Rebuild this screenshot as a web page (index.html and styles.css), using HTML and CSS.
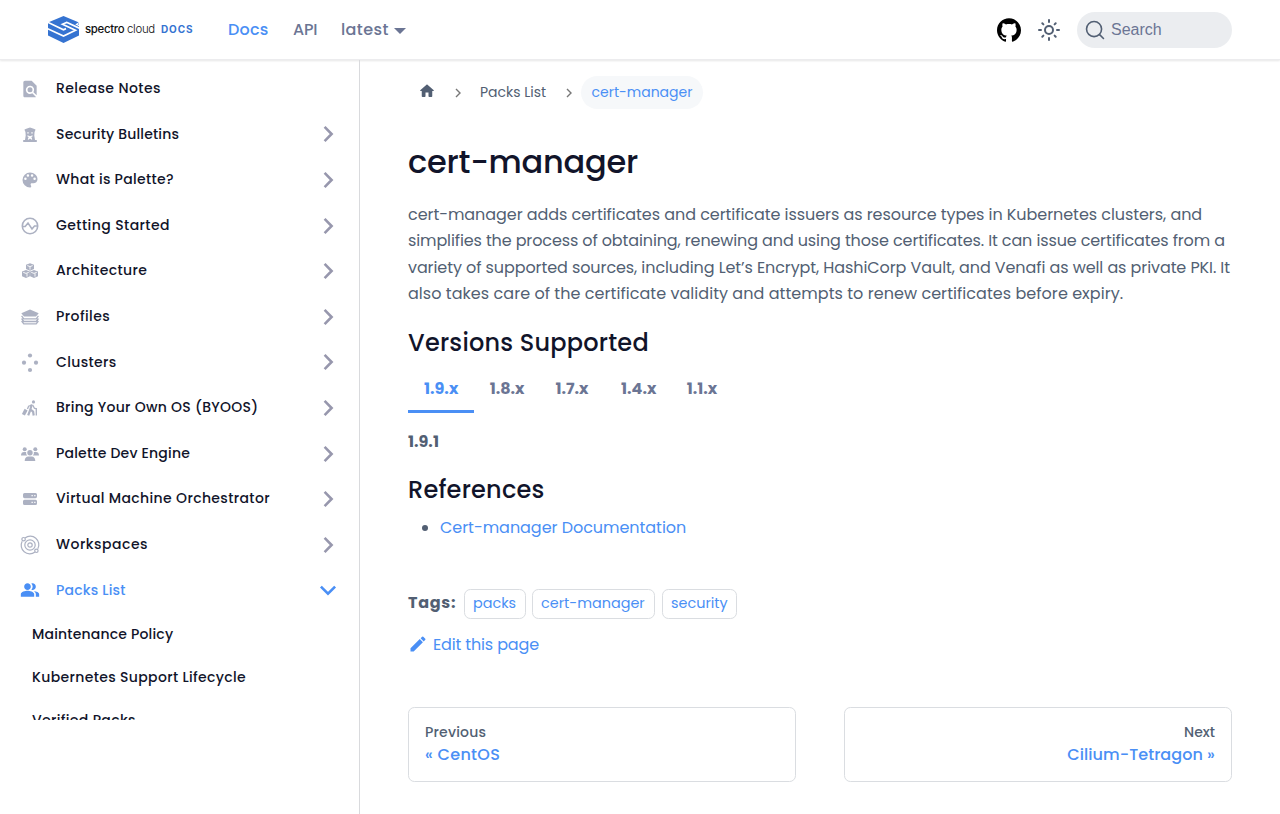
FILE: index.html
```html
<!DOCTYPE html>
<html lang="en">
<head>
<meta charset="utf-8">
<title>cert-manager | Palette</title>
<link rel="stylesheet" href="styles.css">
</head>
<body>
<svg class="defs" aria-hidden="true">
  <symbol id="chev" viewBox="0 0 18 18"><path d="M5.600 1.900 12.600 9 5.600 16.100" fill="none" stroke="currentColor" stroke-width="2.600"/></symbol>
  <symbol id="people" viewBox="0 0 24 24"><path d="M16.67 13.13C18.04 14.06 19 15.32 19 17v3h4v-3c0-2.18-3.57-3.47-6.33-3.87M15 12c2.21 0 4-1.79 4-4s-1.79-4-4-4c-.47 0-.91.1-1.33.24a5.98 5.98 0 0 1 0 7.52c.42.14.86.24 1.33.24M9 12c2.21 0 4-1.79 4-4s-1.79-4-4-4-4 1.79-4 4 1.79 4 4 4m0 1c-2.67 0-8 1.34-8 4v3h16v-3c0-2.66-5.33-4-8-4"/></symbol>
</svg>
<header class="navbar">
  <a class="logo">
    <svg class="mark" viewBox="0 0 31 27"><path fill="#3573d1" d="M0 6.500 15.500 0 31 6.500V19.500L15.500 27 0 19.500z"/><path fill="none" stroke="#fff" stroke-width="1.700" d="M-.5 12.700 15.500 20 27.500 14.200 14.500 8.200 19 6.200M-.5 6.200 15.500 13.700 18 12.600M31.500 12.200 18.500 6.200"/><path fill="none" stroke="#fff" stroke-width="1.200" d="M31.500 6.300 28.500 8.300 32 10"/></svg>
    <span class="brand">spectro <span class="cloud">cloud</span></span>
    <span class="docs">DOCS</span>
  </a>
  <nav class="links"><a class="active n-docs">Docs</a><a class="n-api">API</a><a class="drop n-latest">latest</a></nav>
  <div class="tools">
    <svg class="github" viewBox="0 0 24 24"><path d="M12 .297c-6.63 0-12 5.373-12 12 0 5.303 3.438 9.8 8.205 11.385.6.113.82-.258.82-.577 0-.285-.01-1.04-.015-2.04-3.338.724-4.042-1.61-4.042-1.61C4.422 18.07 3.633 17.7 3.633 17.7c-1.087-.744.084-.729.084-.729 1.205.084 1.838 1.236 1.838 1.236 1.07 1.835 2.809 1.305 3.495.998.108-.776.417-1.305.76-1.605-2.665-.3-5.466-1.332-5.466-5.93 0-1.31.465-2.38 1.235-3.22-.135-.303-.54-1.523.105-3.176 0 0 1.005-.322 3.3 1.23.96-.267 1.98-.399 3-.405 1.02.006 2.04.138 3 .405 2.28-1.552 3.285-1.23 3.285-1.23.645 1.653.24 2.873.12 3.176.765.84 1.23 1.91 1.23 3.22 0 4.61-2.805 5.625-5.475 5.92.42.36.81 1.096.81 2.22 0 1.606-.015 2.896-.015 3.286 0 .315.21.69.825.57C20.565 22.092 24 17.592 24 12.297c0-6.627-5.373-12-12-12"/></svg>
    <svg class="sun" viewBox="0 0 24 24"><g fill="none" stroke="#525f73" stroke-width="2" stroke-linecap="round"><circle cx="12" cy="12" r="4"/><path d="M2 12h2M20 12h2M12 2v2M12 20v2M5.300 5.300l1.100 1.100M17.600 17.600l1.100 1.100M5.300 18.700l1.100-1.100M17.600 6.400l1.100-1.100"/></g></svg>
    <div class="search"><svg viewBox="0 0 20 20"><path d="M14.386 14.386l4.088 4.088-4.088-4.088c-2.942 2.942-7.711 2.942-10.653 0s-2.942-7.711 0-10.653 7.711-2.942 10.653 0 2.942 7.711 0 10.653z" stroke="#525f73" stroke-width="1.600" fill="none" stroke-linecap="round" stroke-linejoin="round"/></svg><span>Search</span></div>
  </div>
</header>
<div class="page">
<aside class="sidebar">
  <ul class="menu">
    <li><svg class="ic" viewBox="0 0 24 24"><path d="M20 19.590V8l-6-6H6c-1.100 0-2 .9-2 2v16c0 1.100.9 2 2 2h12c.45 0 .85-.15 1.190-.4l-4.430-4.430A5 5 0 1 1 16.170 15.750zM9 13a3 3 0 1 0 6 0 3 3 0 0 0-6 0"/></svg><span class="s1">Release Notes</span></li>
    <li><svg class="ic" viewBox="0 0 20 20"><path fill-rule="evenodd" d="M4.500 4.500 7 3.500 10 2.500l3 1 2.500 1-.6 2H14.600l-.3 4 .7 4.500h1.800V17H3.200v-2H5l.7-4.500-.3-4h-.3zM7.300 7.200v1.300h1.400V7.200zm4 0v1.300h1.400V7.200zM7.500 10.300v1.200l1.200.6-1 2.200.8.500 1.500-1.300 1.500 1.300.8-.5-1-2.200 1.200-.6v-1.200l-2.500 1z"/></svg><span class="s2">Security Bulletins</span><svg class="ch"><use href="#chev"/></svg></li>
    <li><svg class="ic" viewBox="0 0 24 24"><path d="M12 3a9 9 0 0 0 0 18c.83 0 1.500-.67 1.500-1.500 0-.39-.15-.74-.39-1.010-.23-.26-.38-.61-.38-.99 0-.83.67-1.500 1.500-1.500H16c2.760 0 5-2.240 5-5 0-4.420-4.030-8-9-8m-5.500 9a1.500 1.500 0 1 1 0-3 1.500 1.500 0 0 1 0 3m3-4a1.500 1.500 0 1 1 0-3 1.500 1.500 0 0 1 0 3m5 0a1.500 1.500 0 1 1 0-3 1.500 1.500 0 0 1 0 3m3 4a1.500 1.500 0 1 1 0-3 1.500 1.500 0 0 1 0 3"/></svg><span class="s3">What is Palette?</span><svg class="ch"><use href="#chev"/></svg></li>
    <li><svg class="ic" viewBox="0 0 20 20"><g fill="none" stroke="currentColor" stroke-width="1.600"><circle cx="10" cy="10" r="7.700"/><path d="M2.500 10.500h2.700L8 7l4 6 2.500-3h3"/></g></svg><span class="s4">Getting Started</span><svg class="ch"><use href="#chev"/></svg></li>
    <li><svg class="ic" viewBox="0 0 20 20"><path d="M10 2.300 14 3.800v4.300L10 9.800 6 8.100V3.800zM6 9l3.900 1.500v4.700L6 17l-4-1.800v-4.700zM14 9l4 1.500v4.700L14 17l-3.900-1.800v-4.700z"/><path stroke="#fff" fill="none" stroke-width=".9" d="m7.300 4.600 2.700 1 2.700-1M10 5.600v3M3.200 11.300l2.800 1.100 2.800-1.100M7 12.400v3.200M11.200 11.300l2.800 1.100 2.800-1.100M15 12.400v3.200"/></svg><span class="s5">Architecture</span><svg class="ch"><use href="#chev"/></svg></li>
    <li><svg class="ic" viewBox="0 0 20 20"><path d="m10 2.500 8.700 3.800L16 9.600H4L1.300 6.300z"/><path fill="none" stroke="currentColor" stroke-width="1.300" d="m1.600 8.800 2.200 3h12.400l2.200-3M1.600 11.500l2.200 3h12.400l2.200-3M1.600 14l2.200 2.900h12.400l2.200-2.900"/></svg><span class="s6">Profiles</span><svg class="ch"><use href="#chev"/></svg></li>
    <li><svg class="ic" viewBox="0 0 20 20"><circle cx="10" cy="2.500" r="2.100"/><circle cx="4" cy="9.700" r="2.100"/><circle cx="16" cy="9.700" r="2.100"/><circle cx="10" cy="17" r="2.100"/></svg><span class="s7">Clusters</span><svg class="ch"><use href="#chev"/></svg></li>
    <li><svg class="ic" viewBox="0 0 20 20"><circle cx="13.500" cy="3.900" r="1.600"/><path fill="none" stroke="currentColor" stroke-width="2.200" d="m11.800 6.500-1.500 5 2.800 2 .6 4M10.200 12l-2 5.400"/><path fill="none" stroke="currentColor" stroke-width="1.300" d="M12 7 8.600 8.200 7.500 11M12.700 7l1.700 3.200 2 .8M16.300 10v7.500"/><path d="m4.600 10.800 3 1.700-2.700 5-3-1.600z"/></svg><span class="s8">Bring Your Own OS (BYOOS)</span><svg class="ch"><use href="#chev"/></svg></li>
    <li><svg class="ic" viewBox="0 0 20 20"><circle cx="4.700" cy="5.300" r="2"/><circle cx="15.300" cy="5.300" r="2"/><circle cx="10" cy="8.800" r="2.700"/><path d="M1 11.500c0-2.500 1.200-3.500 3-3.500h2.200c-.3 1.600.1 2.600 1 3.500zM19 11.500c0-2.500-1.200-3.500-3-3.500h-2.200c.3 1.600-.1 2.600-1 3.500zM4.700 17c0-3 1.500-4.500 3.600-4.500h3.400c2.100 0 3.600 1.500 3.600 4.500z"/></svg><span class="s9">Palette Dev Engine</span><svg class="ch"><use href="#chev"/></svg></li>
    <li><svg class="ic" viewBox="0 0 20 20"><path fill-rule="evenodd" d="M4.500 4h11Q17 4 17 5.500v2Q17 9.300 15.500 9.300h-11Q3 9.300 3 7.500v-2Q3 4 4.500 4m7 2v1.300h1.300V6zm2.700 0v1.300h1.300V6zM4.500 10.700h11q1.500 0 1.500 1.500v2.300q0 1.500-1.500 1.500h-11Q3 16 3 14.500v-2.300q0-1.500 1.500-1.500m7 2v1.300h1.300v-1.300zm2.700 0v1.300h1.300v-1.300z"/></svg><span class="s10">Virtual Machine Orchestrator</span><svg class="ch"><use href="#chev"/></svg></li>
    <li><svg class="ic" viewBox="0 0 20 20"><g fill="none" stroke="currentColor" stroke-width="1.200"><circle cx="10" cy="10" r="2.200"/><circle cx="10" cy="10" r="5.200"/><path d="M5 2.900A8.600 8.600 0 0 1 17.800 13.800M15 17.100A8.600 8.600 0 0 1 2.200 6.200"/><circle cx="3.600" cy="4.200" r="1.700"/><circle cx="16.400" cy="15.800" r="1.700"/></g></svg><span class="s11">Workspaces</span><svg class="ch"><use href="#chev"/></svg></li>
    <li class="on"><svg class="ic"><use href="#people"/></svg><span class="s12">Packs List</span><svg class="ch down"><use href="#chev"/></svg></li>
  </ul>
  <ul class="sub"><li><span class="u1">Maintenance Policy</span></li><li><span class="u2">Kubernetes Support Lifecycle</span></li><li><span class="u3">Verified Packs</span></li></ul>
</aside>
<main>
  <nav class="crumbs">
    <svg class="home" viewBox="0 0 24 24"><path d="M10 19v-5h4v5c0 .55.45 1 1 1h3c.55 0 1-.45 1-1v-7h1.700c.46 0 .68-.57.33-.87L12.670 3.600c-.38-.34-.96-.34-1.340 0l-8.360 7.530c-.34.3-.13.870.33.870H5v7c0 .55.45 1 1 1h3c.55 0 1-.45 1-1"/></svg>
    <svg class="sep" viewBox="0 0 8 10"><path d="m2 1 4 4-4 4" fill="none" stroke="#777" stroke-width="1.400"/></svg>
    <span class="crumb c-list">Packs List</span>
    <svg class="sep second" viewBox="0 0 8 10"><path d="m2 1 4 4-4 4" fill="none" stroke="#777" stroke-width="1.400"/></svg>
    <span class="pill"><span class="c-cert">cert-manager</span></span>
  </nav>
  <h1>cert-manager</h1>
  <p class="intro"><span class="l1">cert-manager adds certificates and certificate issuers as resource types in Kubernetes clusters, and</span> <span class="l2">simplifies the process of obtaining, renewing and using those certificates. It can issue certificates from a</span> <span class="l3">variety of supported sources, including Let’s Encrypt, HashiCorp Vault, and Venafi as well as private PKI. It</span> <span class="l4">also takes care of the certificate validity and attempts to renew certificates before expiry.</span></p>
  <h2 class="h-ver">Versions Supported</h2>
  <div class="tabs"><a class="sel">1.9.x</a><a>1.8.x</a><a>1.7.x</a><a>1.4.x</a><a>1.1.x</a></div>
  <p class="version">1.9.1</p>
  <h2 class="h-ref">References</h2>
  <ul class="refs"><li><a>Cert-manager Documentation</a></li></ul>
  <div class="tags"><b>Tags:</b><a class="g1">packs</a><a class="g2">cert-manager</a><a class="g3">security</a></div>
  <a class="edit"><svg viewBox="0 0 40 40"><path d="m34.500 11.700-3 3.100-6.300-6.300 3.100-3q.5-.5 1.200-.5t1.100.5l3.900 3.900q.5.4.5 1.100t-.5 1.200zM5 28.700l18.500-18.600 6.300 6.300L11.300 35H5z"/></svg><span>Edit this page</span></a>
  <nav class="pager">
    <a><small class="p1">Previous</small><span class="p2">« CentOS</span></a>
    <a class="next"><small class="p3">Next</small><span class="p4">Cilium-Tetragon »</span></a>
  </nav>
</main>
</div>
</body>
</html>
```
FILE: styles.css
```css
*{box-sizing:border-box}
body{margin:0;height:814px;overflow:hidden;background:#fff;color:#525f73;font:16px/26.4px Poppins,Inter,"Open Sans",sans-serif}
ul{list-style:none;margin:0;padding:0}
svg{fill:currentColor;flex:none;display:block}
.defs{display:none}
.navbar{height:60px;padding:0 48px;display:flex;align-items:center;box-shadow:0 1px 2px rgba(0,0,0,.1);border-bottom:1px solid #ececee;white-space:nowrap}
.logo{display:flex;align-items:center;width:180px}
.mark{width:31px;height:27px}
.brand{margin-left:6px;width:71px;font:500 11.400px/16px Inter,sans-serif;color:#111;letter-spacing:-.3px;margin-top:-2px}
.cloud{font-weight:300}
.docs{margin-left:5px;font:700 10px/16px Inter,sans-serif;color:#3573d1;letter-spacing:.9px;margin-top:-2px}
.links{display:flex;gap:24px;font-weight:500;color:#6b7594;padding-top:1.500px}
.links a{white-space:nowrap}
.n-docs{width:41px;letter-spacing:.2px}
.n-api{width:24px;letter-spacing:-.2px}
.n-latest{letter-spacing:.4px}
.active,.on{color:#4a8ff5}
.drop{display:flex;align-items:center;gap:5px}
.drop:after{content:"";border:6px solid transparent;border-top-color:currentColor;border-bottom:0;margin-top:1px}
.tools{margin-left:auto;display:flex;align-items:center}
.github{width:24px;height:24px;fill:#000}
.sun{width:24px;height:24px;margin:0 16px}
.search{width:155px;height:36px;border-radius:18px;background:#ebedf0;display:flex;align-items:center;padding-left:8px;gap:6px;color:#6b7594;font:16px "Liberation Sans",Arial,sans-serif}
.search svg{width:20px;height:20px}
.page{display:flex;height:754px}
.sidebar{width:360px;border-right:1px solid #d9dadd;padding:7.500px 8px 94px;font-size:14px;font-weight:500;color:#11142a;display:flex;flex-direction:column}
.menu{flex:none}
.menu li{height:41.600px;margin-bottom:4px;display:flex;align-items:center;padding:0 12px;white-space:nowrap}
.menu .on{color:#4a8ff5}
.ic{width:20px;height:20px;margin:1.400px 16px 0 0;color:#acb1c2}
.on .ic{color:#4a8ff5;margin-top:0}
.ch{width:18px;height:18px;margin:1px 2px 0 auto;color:#9797ad}
.on .ch{color:#4a8ff5}
.down{transform:rotate(90deg)}
.s1,.s4,.s6{letter-spacing:.42px}
.s2{letter-spacing:.17px}
.s3{letter-spacing:.3px}
.s5,.s7,.s10{letter-spacing:.36px}
.s8{letter-spacing:.28px}
.s9,.s12{letter-spacing:.2px}
.s11{letter-spacing:.5px}
.u1{letter-spacing:.18px}
.u2,.u3{letter-spacing:.35px}
.sub{min-height:0;flex:1;overflow:hidden;padding-left:24px;margin-top:-1.500px}
.sub li{height:43px;display:flex;align-items:center;white-space:nowrap}
main{flex:1;min-width:0;padding:16px 48px 0;white-space:nowrap}
.crumbs{display:flex;align-items:center;height:33px;font-size:14px}
.home{width:18px;height:18px;margin:-3px 0 0 10px}
.sep{width:8px;height:10px;margin:1px 0 0 18px}
.crumb{margin-left:18px;width:67px}
.second{margin-left:18px}
.pill{margin-left:8px;width:122px;height:33px;border-radius:17px;background:#f6f8fa;color:#4a8ff5;display:flex;align-items:center;justify-content:center}
h1,h2{margin:0;color:#11142a;font-weight:500}
h1{font-size:32px;line-height:42px;padding-top:31.500px;letter-spacing:-.25px}
h2{font-size:24px;line-height:30px;letter-spacing:.22px}
p{margin:0}
.intro{padding-top:19.400px}
.intro span{display:block}
.l1{letter-spacing:-.06px}
.l2{letter-spacing:-.12px}
.l3{letter-spacing:-.087px}
.l4{letter-spacing:.045px}
.h-ver{margin-top:20px}
.tabs{display:flex;height:55px;font-weight:700;color:#6b7594}
.tabs a{width:65.700px;padding:18.200px 0 0 16px}
.tabs .sel{color:#4a8ff5;border-bottom:3px solid #4a8ff5}
.version{padding-top:16px;font-weight:700}
.h-ref{margin-top:20px}
.refs{margin-top:10px;padding-left:32px;list-style:disc}
.refs a,.edit{color:#4a8ff5}
.refs a{letter-spacing:-.04px}
.tags{display:flex;align-items:center;margin-top:48px;height:30px}
.tags b{width:56px;letter-spacing:.7px;margin-top:-2px}
.tags a{height:30px;border:1px solid #dadde1;border-radius:6.400px;color:#4a8ff5;font-size:14.400px;line-height:27px;padding-left:8px}
.g1{width:62px}
.g2{width:123px;margin:0 7px 0 6px}
.g3{width:75px}
.edit{display:flex;align-items:center;margin-top:12px;height:27px;gap:5px;letter-spacing:-.15px}
.edit svg{width:20px;height:20px;margin-top:-1px}
.pager{display:flex;gap:48px;margin-top:49px}
.pager a{flex:1;height:75px;border:1px solid #dadde1;border-radius:6.400px;padding:13px 16px;color:#4a8ff5;font-weight:500;line-height:24px;display:flex;flex-direction:column}
.pager small{font-size:14px;color:#525f73;line-height:22px}
.pager .next{align-items:flex-end}
.p1{letter-spacing:.2px}
.p2{letter-spacing:.3px}
.p4{letter-spacing:.06px}
```
